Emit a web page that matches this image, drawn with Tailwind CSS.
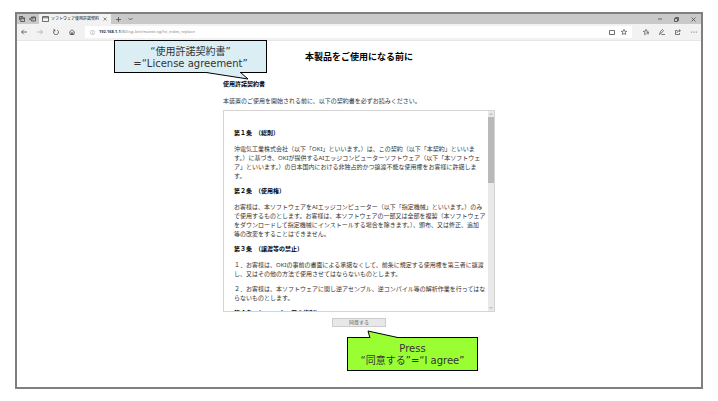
<!DOCTYPE html>
<html lang="ja">
<head>
<meta charset="utf-8">
<meta name="viewport" content="width=device-width, initial-scale=1">
<title>ソフトウェア使用許諾契約書</title>
<script src="https://cdn.jsdelivr.net/npm/@tailwindcss/browser@4"></script>
</head>
<body class="bg-white px-[15px] py-3 font-['Noto_Sans','Noto_Sans_CJK_JP',sans-serif] text-[#333]">
<div class="relative flex min-h-[calc(100vh-24px)] flex-col border-2 border-[#7f7f7f] bg-white">

  <!-- Tab strip -->
  <div class="flex h-[10px] items-center bg-[#c9c9c9] text-[#444]">
    <div class="flex w-[22px] items-center justify-between pl-[2px]">
      <button aria-label="タブ一覧"><svg class="block size-[6px]" viewBox="0 0 12 12" fill="none" stroke="currentColor" stroke-width="1.6"><path d="M1 8V1h7M3.500 3.500h7.500v7.500H3.500zM3.500 5.500H11"/></svg></button>
      <button aria-label="タブを保存"><svg class="block h-[6px] w-[7px]" viewBox="0 0 14 12" fill="none" stroke="currentColor" stroke-width="1.6"><path d="M5 4V2h8v8H5V8M5 3.500h8M9 6H1m2.500-2.500L1 6l2.500 2.500"/></svg></button>
      <span></span>
    </div>
    <div class="flex h-full w-[72px] items-center gap-[2px] bg-[#f2f2f2] pl-[3px] pr-1">
      <svg class="h-[6px] w-[7px] shrink-0" viewBox="0 0 14 12" fill="none" stroke="currentColor" stroke-width="1.500"><path d="M1 1h12v10H1zM1 3.500h12"/></svg>
      <span class="flex-1 whitespace-nowrap text-[4px] leading-[8px] text-black">ソフトウェア使用許諾契約</span>
      <button aria-label="タブを閉じる"><svg class="block size-[4px]" viewBox="0 0 8 8" fill="none" stroke="currentColor" stroke-width="1.200"><path d="M1 1l6 6M7 1L1 7"/></svg></button>
    </div>
    <div class="flex items-center gap-[7px] pl-[5px]">
      <button aria-label="新しいタブ"><svg class="block size-[5px]" viewBox="0 0 10 10" fill="none" stroke="currentColor" stroke-width="1.500"><path d="M5 0v10M0 5h10"/></svg></button>
      <button aria-label="タブのプレビュー"><svg class="block h-[4px] w-[5px]" viewBox="0 0 10 8" fill="none" stroke="currentColor" stroke-width="1.500"><path d="M1 2l4 4 4-4"/></svg></button>
    </div>
    <div class="ml-auto flex items-center gap-3 pr-[5px]">
      <button aria-label="最小化"><svg class="block size-[4px]" viewBox="0 0 8 8" stroke="currentColor" stroke-width="1.500"><path d="M0 4h8"/></svg></button>
      <button aria-label="元に戻す"><svg class="block size-[5px]" viewBox="0 0 10 10" fill="none" stroke="currentColor" stroke-width="1.600"><path d="M1 3h6v6H1zM3 3V1h6v6H7"/></svg></button>
      <button aria-label="閉じる"><svg class="block size-[5px]" viewBox="0 0 10 10" fill="none" stroke="currentColor" stroke-width="1.500"><path d="M1 1l8 8M9 1L1 9"/></svg></button>
    </div>
  </div>

  <!-- Navigation bar -->
  <div class="flex h-[17px] items-center border-b border-[#e6e6e6] bg-[#f2f2f2] text-[#444]">
    <div class="flex w-[68px] items-center gap-[10px] pl-1">
      <button aria-label="戻る"><svg class="block size-[6px]" viewBox="0 0 12 12" fill="none" stroke="currentColor" stroke-width="1.500"><path d="M12 6H1m4.500-4.500L1 6l4.500 4.500"/></svg></button>
      <button aria-label="進む" class="text-[#aaa]"><svg class="block size-[6px]" viewBox="0 0 12 12" fill="none" stroke="currentColor" stroke-width="1.500"><path d="M0 6h11M6.500 1.500L11 6l-4.500 4.500"/></svg></button>
      <button aria-label="更新"><svg class="block size-[6px]" viewBox="0 0 12 12" fill="none" stroke="currentColor" stroke-width="1.500"><path d="M3.500 2a5 5 0 1 0 5 0M3.500 5V1.500H.5"/></svg></button>
      <button aria-label="ホーム"><svg class="block size-[6px]" viewBox="0 0 12 12" fill="none" stroke="currentColor" stroke-width="1.500"><path d="M.5 6.500L6 1.500l5.500 5M2 5.500V11h8V5.500M5 11V7.500h2V11"/></svg></button>
    </div>
    <div class="flex h-3 flex-1 items-center gap-1 bg-white px-[5px]">
      <svg class="size-[5px] text-[#999]" viewBox="0 0 10 10" fill="none" stroke="currentColor" stroke-width="1"><circle cx="5" cy="5" r="4.300"/><path d="M5 4.500V8M5 2v1"/></svg>
      <a href="#" class="flex-1 whitespace-nowrap text-[4px] leading-[8px] text-[#888]"><b class="text-[#333]">192.168.1.1</b>/80/cgi-bin/mainte.cgi?st_index_replace</a>
      <button aria-label="読み取りビュー"><svg class="block h-[5px] w-[6px]" viewBox="0 0 12 10" fill="none" stroke="currentColor" stroke-width="1.500"><path d="M1 1h10v8H1zM6 8v2"/></svg></button>
      <button aria-label="お気に入りに追加" class="pl-[2px]"><svg class="block size-[6px]" viewBox="0 0 12 12" fill="none" stroke="currentColor" stroke-width="1.300"><path d="M6 .8l1.500 3.700 4 .2-3.100 2.500 1.100 3.900L6 8.900l-3.500 2.200 1.100-3.900L.5 4.700l4-.2z"/></svg></button>
    </div>
    <div class="flex items-center gap-[10px] pl-[11px] pr-1">
      <button aria-label="ハブ"><svg class="block size-[6px]" viewBox="0 0 12 12" fill="none" stroke="currentColor" stroke-width="1.300"><path d="M7 9.500l-4 1.600.8-3.900L.5 4.700l4-.2L6 .8l1.500 3.700H11M7 7h5M8 9.500h4"/></svg></button>
      <button aria-label="ノートの追加"><svg class="block size-[6px]" viewBox="0 0 12 12" fill="none" stroke="currentColor" stroke-width="1.400"><path d="M1 11l2-6 4-4 2 2-4 5-4 3zM5 11h7"/></svg></button>
      <button aria-label="共有"><svg class="block size-[6px]" viewBox="0 0 12 12" fill="none" stroke="currentColor" stroke-width="1.400"><path d="M5 3H1v8h8V8M4 8c0-3 2-4.500 6-4.500M8 1l3 2.500L8 6"/></svg></button>
      <button aria-label="設定など"><svg class="block size-[6px]" viewBox="0 0 12 12" fill="currentColor"><circle cx="1.500" cy="6" r="1"/><circle cx="6" cy="6" r="1"/><circle cx="10.500" cy="6" r="1"/></svg></button>
    </div>
  </div>

  <!-- Page -->
  <main class="mx-auto flex w-[272px] flex-col pt-[10px] text-[6px] leading-[9px]">
    <h1 class="text-center text-[9px] font-bold leading-3 text-black">本製品をご使用になる前に</h1>
    <h2 class="pt-[17px] font-bold text-black">使用許諾契約書</h2>
    <p class="pt-2">本装置のご使用を開始される前に、以下の契約書を必ずお読みください。</p>
    <section class="mt-1 flex h-[202px] border border-[#d4d4d4]" aria-label="使用許諾契約書">
      <div class="flex flex-1 flex-col gap-[6px] overflow-hidden whitespace-nowrap pl-[10px] pt-[18px]">
        <h3 class="pb-px font-bold text-black">第１条　（総則）</h3>
        <p>沖電気工業株式会社（以下「OKI」といいます。）は、この契約（以下「本契約」といいま<br>す。）に基づき、OKIが提供するAIエッジコンピューターソフトウェア（以下「本ソフトウェ<br>ア」といいます。）の日本国内における非独占的かつ譲渡不能な使用権をお客様に許諾しま<br>す。</p>
        <h3 class="pb-px font-bold text-black">第２条　（使用権）</h3>
        <p>お客様は、本ソフトウェアをAIエッジコンピューター（以下「指定機械」といいます。）のみ<br>で使用するものとします。お客様は、本ソフトウェアの一部又は全部を複製（本ソフトウェア<br>をダウンロードして指定機械にインストールする場合を除きます。）、頒布、又は修正、追加<br>等の改変をすることはできません。</p>
        <h3 class="pb-px font-bold text-black">第３条　（譲渡等の禁止）</h3>
        <p>１．お客様は、OKIの事前の書面による承諾なくして、前条に規定する使用権を第三者に譲渡<br>し、又はその他の方法で使用させてはならないものとします。</p>
        <p>２．お客様は、本ソフトウェアに関し逆アセンブル、逆コンパイル等の解析作業を行ってはな<br>らないものとします。</p>
        <h3 class="pb-px font-bold text-black">第４条　（ソフトウェアの権利）</h3>
      </div>
      <div class="flex w-[6px] shrink-0 flex-col bg-[#e9e9e9] text-[#888]" aria-hidden="true">
        <svg class="size-[6px]" viewBox="0 0 12 12" fill="none" stroke="currentColor" stroke-width="1.300"><path d="M3 8l3-3 3 3"/></svg>
        <div class="h-[66px] bg-[#b9b9b9]"></div>
        <svg class="mt-auto size-[6px]" viewBox="0 0 12 12" fill="none" stroke="currentColor" stroke-width="1.300"><path d="M3 4l3 3 3-3"/></svg>
      </div>
    </section>
    <button class="mx-auto mt-[6px] h-[9px] w-[54px] border border-[#ccc] bg-[#e8e8e8] text-[5px] leading-[7px] text-[#555]">同意する</button>
  </main>

  <!-- Annotation callouts -->
  <div class="absolute left-[calc(50%-245px)] top-[26px] w-[153px] border border-black bg-[#daeef3] text-center text-[10px] leading-3">
    <p class="pb-[2px] pt-[5px] font-['DejaVu_Sans','Noto_Sans_CJK_JP',sans-serif]">“使用許諾契約書”<br>=“License agreement”</p>
    <svg class="absolute left-[86px] top-full h-2 w-[50px]" viewBox="0 0 50 8"><path d="M2 0L47 7 39 0" fill="#daeef3" stroke="#000"/></svg>
  </div>
  <div class="absolute left-[calc(50%-12px)] top-[323px] w-[131px] border border-black bg-[#99ff33] text-center text-[10px] leading-3">
    <p class="pb-[3px] pt-[5px] font-['DejaVu_Sans','Noto_Sans_CJK_JP',sans-serif]">Press<br>“同意する”=“I agree”</p>
    <svg class="absolute bottom-full left-[18px] h-2 w-9" viewBox="0 0 36 8"><path d="M4 8L2 1 34 8" fill="#99ff33" stroke="#000"/></svg>
  </div>
</div>
</body>
</html>
